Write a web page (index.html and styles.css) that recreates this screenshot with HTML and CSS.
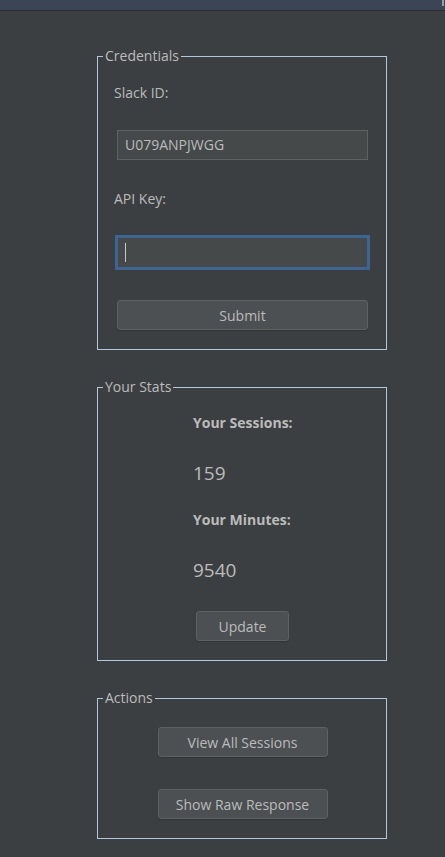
FILE: index.html
```html
<!DOCTYPE html>
<html>
<head>
<meta charset="utf-8">
<link rel="stylesheet" href="styles.css">
</head>
<body>
<div class="topbar"><span class="corner"></span></div>
<main class="panel">
  <fieldset class="group creds">
    <legend>Credentials</legend>
    <div class="creds-body">
      <div class="label first">Slack ID:</div>
      <div class="field">U079ANPJWGG</div>
      <div class="label second">API Key:</div>
      <div class="field focused"><span class="caret"></span></div>
      <div class="btn wide">Submit</div>
    </div>
  </fieldset>

  <fieldset class="group stats">
    <legend>Your Stats</legend>
    <div class="stat-col">
      <div class="stat-label s1">Your Sessions:</div>
      <div class="stat-value v1">159</div>
      <div class="stat-label s2">Your Minutes:</div>
      <div class="stat-value v2">9540</div>
    </div>
    <div class="btn update">Update</div>
  </fieldset>

  <fieldset class="group actions">
    <legend>Actions</legend>
    <div class="btn action a1">View All Sessions</div>
    <div class="btn action a2">Show Raw Response</div>
  </fieldset>
</main>
</body>
</html>
```

FILE: styles.css
```css
html, body {
  margin: 0;
  padding: 0;
  background: #3c3f41;
  height: 100%;
}
body {
  font-family: "Open Sans", "Noto Sans", sans-serif;
  font-size: 14px;
  color: #bbbbbb;
  overflow: hidden;
}
.topbar {
  height: 10px;
  background: #3c4555;
  border-bottom: 1px solid #2b2d30;
  display: flex;
  justify-content: flex-end;
}
.corner {
  width: 2px;
  height: 6px;
  background: #9a9ea4;
  margin-right: 1px;
}
.panel {
  padding: 37px 0 0 97px;
  width: 290px;
  display: flex;
  flex-direction: column;
  gap: 29px;
}
.group {
  margin: 0;
  padding: 0;
  border: 1px solid #b2c7de;
  min-width: 0;
  display: flex;
  flex-direction: column;
}
.group legend {
  margin-left: 5px;
  padding: 0 2px;
  line-height: 16px;
  font-size: 14px;
  color: #bbbbbb;
}
.creds-body {
  padding: 0 18px 0 19px;
  display: flex;
  flex-direction: column;
}
.label {
  line-height: 20px;
  margin-left: -3px;
}
.label.first { margin-top: 19px; }
.label.second { margin-top: 29px; }
.field {
  box-sizing: border-box;
  height: 30px;
  background: #45494a;
  border: 1px solid #5f6263;
  padding: 0 7px;
  line-height: 28px;
  margin-top: 27px;
  display: flex;
  align-items: center;
}
.field.focused {
  margin-top: 28px;
  height: 31px;
  border-color: #3e6491;
  box-shadow: 0 0 0 2px #3e6491;
}
.caret {
  width: 1px;
  height: 19px;
  background: #c8c8c8;
}
.btn {
  box-sizing: border-box;
  height: 30px;
  background: #4c5052;
  border: 1px solid #5e6163;
  border-radius: 3px;
  display: flex;
  align-items: center;
  justify-content: center;
  color: #bbbbbb;
  box-shadow: 0 1px 1px rgba(0,0,0,0.18);
}
.btn.wide { margin-top: 32px; margin-bottom: 19px; }
.stat-col {
  padding-left: 95px;
  display: flex;
  flex-direction: column;
}
.stat-label {
  font-weight: 700;
  line-height: 20px;
}
.stat-label.s1 { margin-top: 18px; }
.stat-label.s2 { margin-top: 24px; }
.stat-value {
  font-size: 19px;
  line-height: 26px;
  margin-top: 27px;
}
.btn.update {
  width: 93px;
  align-self: center;
  margin: 28px 0 19px 1px;
}
.actions { align-items: center; }
.btn.action { width: 170px; margin-left: 1px; }
.btn.a1 { margin-top: 21px; }
.btn.a2 { margin-top: 32px; margin-bottom: 19px; }
```
